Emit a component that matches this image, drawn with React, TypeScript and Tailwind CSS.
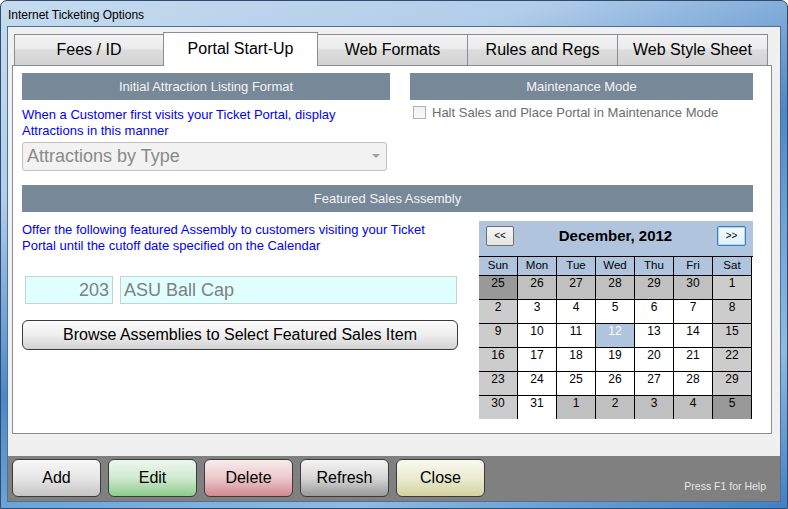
import React from 'react';

const tabs = [
  { label: 'Fees / ID', w: 'w-[150px]' },
  { label: 'Portal Start-Up', w: 'w-[155px]', active: true },
  { label: 'Web Formats', w: 'w-[151px]' },
  { label: 'Rules and Regs', w: 'w-[151px]' },
  { label: 'Web Style Sheet', w: 'w-[151px]' },
];

const weekDays = ['Sun', 'Mon', 'Tue', 'Wed', 'Thu', 'Fri', 'Sat'];

// o = other month, s = selected
const weeks: { d: number; o?: boolean; s?: boolean }[][] = [
  [{ d: 25, o: true }, { d: 26, o: true }, { d: 27, o: true }, { d: 28, o: true }, { d: 29, o: true }, { d: 30, o: true }, { d: 1 }],
  [{ d: 2 }, { d: 3 }, { d: 4 }, { d: 5 }, { d: 6 }, { d: 7 }, { d: 8 }],
  [{ d: 9 }, { d: 10 }, { d: 11 }, { d: 12, s: true }, { d: 13 }, { d: 14 }, { d: 15 }],
  [{ d: 16 }, { d: 17 }, { d: 18 }, { d: 19 }, { d: 20 }, { d: 21 }, { d: 22 }],
  [{ d: 23 }, { d: 24 }, { d: 25 }, { d: 26 }, { d: 27 }, { d: 28 }, { d: 29 }],
  [{ d: 30 }, { d: 31 }, { d: 1, o: true }, { d: 2, o: true }, { d: 3, o: true }, { d: 4, o: true }, { d: 5, o: true }],
];

function cellBg(col: number, day: { o?: boolean; s?: boolean }) {
  const weekend = col === 0 || col === 6;
  if (day.s) return 'bg-[#b0c4de] text-white';
  if (day.o) return weekend ? 'bg-[#999999] text-black' : 'bg-[#c0c0c0] text-black';
  return weekend ? 'bg-[#cccccc] text-black' : 'bg-white text-black';
}

function Calendar() {
  return (
    <div className="w-[274px] mt-[9px] ml-[21px]">
      <div className="h-[35px] bg-[#b0c4de] flex items-center justify-between px-[7px] pb-[5px]">
        <button className="w-[28px] h-[20px] rounded-[2px] border border-[#707070] bg-[linear-gradient(#f6f6f6,#e4e4e4)] text-[10px] leading-none text-black">
          &lt;&lt;
        </button>
        <span className="text-[15px] font-bold text-black">December, 2012</span>
        <button className="w-[29px] h-[20px] rounded-[2px] border border-[#3c7fb1] bg-[linear-gradient(#f4fbff,#dff0fb)] shadow-[inset_0_0_0_1px_#a6d8f7] text-[10px] leading-none text-black">
          &gt;&gt;
        </button>
      </div>
      <div className="grid grid-cols-[repeat(7,39px)] border-t border-black">
        {weekDays.map((d) => (
          <div
            key={d}
            className="h-[19px] border-r border-b border-black bg-[#b0c4de] flex items-center justify-center text-[11.5px] text-black"
          >
            {d}
          </div>
        ))}
        {weeks.map((week, wi) =>
          week.map((day, ci) => (
            <div
              key={`${wi}-${ci}`}
              className={`${wi === 5 ? 'h-[23px]' : 'h-[24px] border-b'} border-r border-black ${cellBg(ci, day)} text-center text-[12px] leading-[14px]`}
            >
              {day.d}
            </div>
          ))
        )}
      </div>
    </div>
  );
}

function SectionBar({ title, className }: { title: string; className: string }) {
  return (
    <div className={`h-[27px] bg-[#778899] text-[#f4f4f4] text-[13px] flex items-center justify-center ${className}`}>
      {title}
    </div>
  );
}

const footerButtons = [
  { label: 'Add', bg: 'bg-[linear-gradient(#f7f7f7,#e6e6e6_50%,#c4c4c4)]' },
  { label: 'Edit', bg: 'bg-[linear-gradient(#eef7ee,#cfe9cf_50%,#8ccc8c)]' },
  { label: 'Delete', bg: 'bg-[linear-gradient(#f8ecec,#ecc8cb_50%,#cf8a91)]' },
  { label: 'Refresh', bg: 'bg-[linear-gradient(#f5f5f5,#d6d6d6_50%,#999999)]' },
  { label: 'Close', bg: 'bg-[linear-gradient(#f8f8ef,#ebebd2_50%,#d3d2a0)]' },
];

export default function App() {
  return (
    <div className="w-[788px] h-[509px] overflow-hidden font-['Liberation_Sans',Arial,sans-serif]">
      <div className="relative w-[788px] h-[509px] rounded-t-[7px] border border-[#2d4c70] bg-[linear-gradient(160deg,#c6dbef_0%,#b2cdea_25%,#4b88c6_50%,#6ea6da_65%,#8dbbe3_80%,#3f80c4_100%)] pt-[25px] px-[6px] pb-[6px] flex flex-col">
        <div className="absolute top-[6px] left-[7px] text-[12px] text-black leading-[16px]">Internet Ticketing Options</div>

        <div className="flex-1 border border-[#4f6f94] bg-[#f0f0f0] flex flex-col">
          {/* tab strip */}
          <div className="flex items-end h-[33px] mt-[5px] ml-[6px]">
            {tabs.map((t, i) =>
              t.active ? (
                <div
                  key={t.label}
                  className={`${t.w} -ml-px h-[34px] -mb-px relative z-10 bg-white border border-b-0 border-[#898c95] flex justify-center pt-[4px] text-[16px] text-black`}
                >
                  {t.label}
                </div>
              ) : (
                <div
                  key={t.label}
                  className={`${t.w} ${i > 0 ? '-ml-px' : ''} h-[31px] border border-b-0 border-[#898c95] bg-[linear-gradient(#f3f3f3,#ebebeb_45%,#dddddd_50%,#d2d2d2)] flex items-center justify-center text-[16px] text-black`}
                >
                  {t.label}
                </div>
              )
            )}
          </div>

          {/* tab page */}
          <div className="ml-[4px] w-[760px] h-[369px] border border-[#898c95] bg-white pl-[9px] pt-[7px]">
            <div className="flex">
              <div className="w-[368px]">
                <SectionBar title="Initial Attraction Listing Format" className="w-[368px]" />
                <p className="mt-[7px] text-[13px] leading-[16px] text-[#0000ff]">
                  When a Customer first visits your Ticket Portal, display
                  <br />
                  Attractions in this manner
                </p>
                <div className="mt-[3px] w-[365px] h-[29px] rounded-[3px] border border-[#c2c2c2] bg-[#f2f2f2] flex items-center justify-between pl-[4px] pr-[6px]">
                  <span className="text-[18px] text-[#8a8a8a]">Attractions by Type</span>
                  <svg width="8" height="5" viewBox="0 0 8 5">
                    <path d="M0 0 L8 0 L4 4 Z" fill="#a0a0a0" />
                  </svg>
                </div>
              </div>
              <div className="ml-[20px] w-[343px]">
                <SectionBar title="Maintenance Mode" className="w-[343px]" />
                <div className="mt-[5px] ml-[3px] flex items-center">
                  <div className="w-[13px] h-[13px] border border-[#b1b1b1] bg-[linear-gradient(#f0f0f0,#fafafa)]" />
                  <span className="ml-[6px] text-[13px] leading-[15px] text-[#6d6d6d]">
                    Halt Sales and Place Portal in Maintenance Mode
                  </span>
                </div>
              </div>
            </div>

            <SectionBar title="Featured Sales Assembly" className="mt-[14px] w-[731px]" />

            <div className="flex">
              <div className="w-[436px]">
                <p className="mt-[10px] text-[13px] leading-[16px] text-[#0000ff] whitespace-nowrap">
                  Offer the following featured Assembly to customers visiting your Ticket
                  <br />
                  Portal until the cutoff date specified on the Calendar
                </p>
                <div className="mt-[22px] ml-[3px] flex gap-[7px]">
                  <div className="w-[88px] h-[28px] border border-[#c6d2d2] bg-[#e0ffff] flex items-center justify-end pr-[3px] text-[18px] text-[#808080]">
                    203
                  </div>
                  <div className="w-[337px] h-[28px] border border-[#c6d2d2] bg-[#e0ffff] flex items-center pl-[3px] text-[18px] text-[#808080]">
                    ASU Ball Cap
                  </div>
                </div>
                <button className="mt-[16px] w-[436px] h-[30px] rounded-[6px] border border-[#3a3a3a] bg-[linear-gradient(#fbfbfb,#eeeeee_50%,#d2d2d2)] text-[16px] text-black">
                  Browse Assemblies to Select Featured Sales Item
                </button>
              </div>
              <Calendar />
            </div>
          </div>

          {/* footer */}
          <div className="mt-auto h-[45px] bg-[#808080] flex items-start pt-[3px] pl-[4px] pr-[14px]">
            <div className="flex gap-[7px]">
              {footerButtons.map((b) => (
                <button
                  key={b.label}
                  className={`w-[89px] h-[38px] rounded-[6px] border border-[#3c3c3c] ${b.bg} text-[16px] text-black`}
                >
                  {b.label}
                </button>
              ))}
            </div>
            <span className="ml-auto self-end mb-[8px] text-[10.5px] leading-[13px] text-[#e6e6e6]">Press F1 for Help</span>
          </div>
        </div>
      </div>
    </div>
  );
}
